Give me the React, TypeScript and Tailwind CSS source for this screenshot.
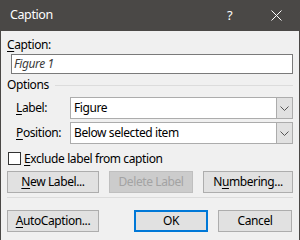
import React from "react";

const font = { fontFamily: '"Noto Sans", "Open Sans", sans-serif' };

function Btn({ children, className = "" }: { children: React.ReactNode; className?: string }) {
  return (
    <div
      className={`h-[22px] flex items-center justify-center bg-[#e1e1e1] border border-[#adadad] text-[12px] text-black ${className}`}
    >
      {children}
    </div>
  );
}

function Select({ value }: { value: string }) {
  return (
    <div className="ml-auto w-[223px] h-[22px] flex border border-[#acacac] bg-white">
      <div className="flex-1 flex items-center pl-[3px] text-[12px] text-black">{value}</div>
      <div className="w-[16px] h-full bg-[#e1e1e1] border-l border-[#acacac] flex items-center justify-center">
        <svg width="9" height="5" viewBox="0 0 9 5">
          <path d="M0.5 0.5 L4.5 4.5 L8.5 0.5" fill="none" stroke="#555" strokeWidth="1" />
        </svg>
      </div>
    </div>
  );
}

export default function App() {
  return (
    <div className="w-[300px] h-[240px] flex flex-col bg-[#f0f0f0] tracking-[-0.4px]" style={font}>
      <div className="h-[31px] bg-[#4a4846] flex items-center pl-[10px] text-white text-[12.5px] shrink-0 relative">
        <span>Caption</span>
        <span className="absolute left-[227px] top-[6px] text-[13px]">?</span>
        <svg className="absolute left-[271px] top-[10px]" width="11" height="11" viewBox="0 0 11 11">
          <path d="M0.5 0.5 L10.5 10.5 M10.5 0.5 L0.5 10.5" stroke="white" strokeWidth="1" />
        </svg>
      </div>
      <div className="flex-1 flex flex-col border-l border-r border-[#4a4846] px-[6px] text-[12px] text-black">
        <div className="mt-[6px] h-[15px] leading-[15px]">
          <span className="underline decoration-1 underline-offset-[2px]">C</span>aption:
        </div>
        <div className="mt-[2px] ml-[4px] h-[20px] border border-[#7a7a7a] bg-white flex items-center pl-[2px] italic text-[#3c3c3c]">
          Figure 1
        </div>
        <div className="mt-[3px] h-[15px] leading-[15px] flex items-center">
          <span>Options</span>
          <div className="flex-1 h-px bg-[#dcdcdc] ml-[6px] mt-[1px]" />
        </div>
        <div className="mt-[5px] flex items-center">
          <span className="ml-[9px]">
            <span className="underline decoration-1 underline-offset-[2px]">L</span>abel:
          </span>
          <Select value="Figure" />
        </div>
        <div className="mt-[3px] flex items-center">
          <span className="ml-[9px]">
            <span className="underline decoration-1 underline-offset-[2px]">P</span>osition:
          </span>
          <Select value="Below selected item" />
        </div>
        <div className="mt-[8px] h-[13px] flex items-center">
          <div className="ml-[1px] w-[13px] h-[13px] border border-[#333] bg-white" />
          <span className="ml-[3px] leading-[13px]">
            <span className="underline decoration-1 underline-offset-[2px]">E</span>xclude label from caption
          </span>
        </div>
        <div className="mt-[6px] flex gap-[10px]">
          <Btn className="w-[92px]">
            <span>
              <span className="underline decoration-1 underline-offset-[2px]">N</span>ew Label...
            </span>
          </Btn>
          <div className="w-[84px] h-[22px] flex items-center justify-center bg-[#cccccc] border border-[#bfbfbf] text-[#a3a3a3]">
            Delete Label
          </div>
          <Btn className="w-[90px]">
            <span>
              N<span className="underline decoration-1 underline-offset-[2px]">u</span>mbering...
            </span>
          </Btn>
        </div>
        <div className="mt-[4px] h-px bg-[#dcdcdc]" />
        <div className="mt-[12px] flex">
          <Btn className="w-[92px]">
            <span>
              <span className="underline decoration-1 underline-offset-[2px]">A</span>utoCaption...
            </span>
          </Btn>
          <div className="ml-auto w-[74px] h-[22px] flex items-center justify-center bg-[#e1e1e1] border-2 border-[#0078d7]">
            OK
          </div>
          <Btn className="ml-[10px] mr-[1px] w-[74px]">Cancel</Btn>
        </div>
      </div>
    </div>
  );
}
